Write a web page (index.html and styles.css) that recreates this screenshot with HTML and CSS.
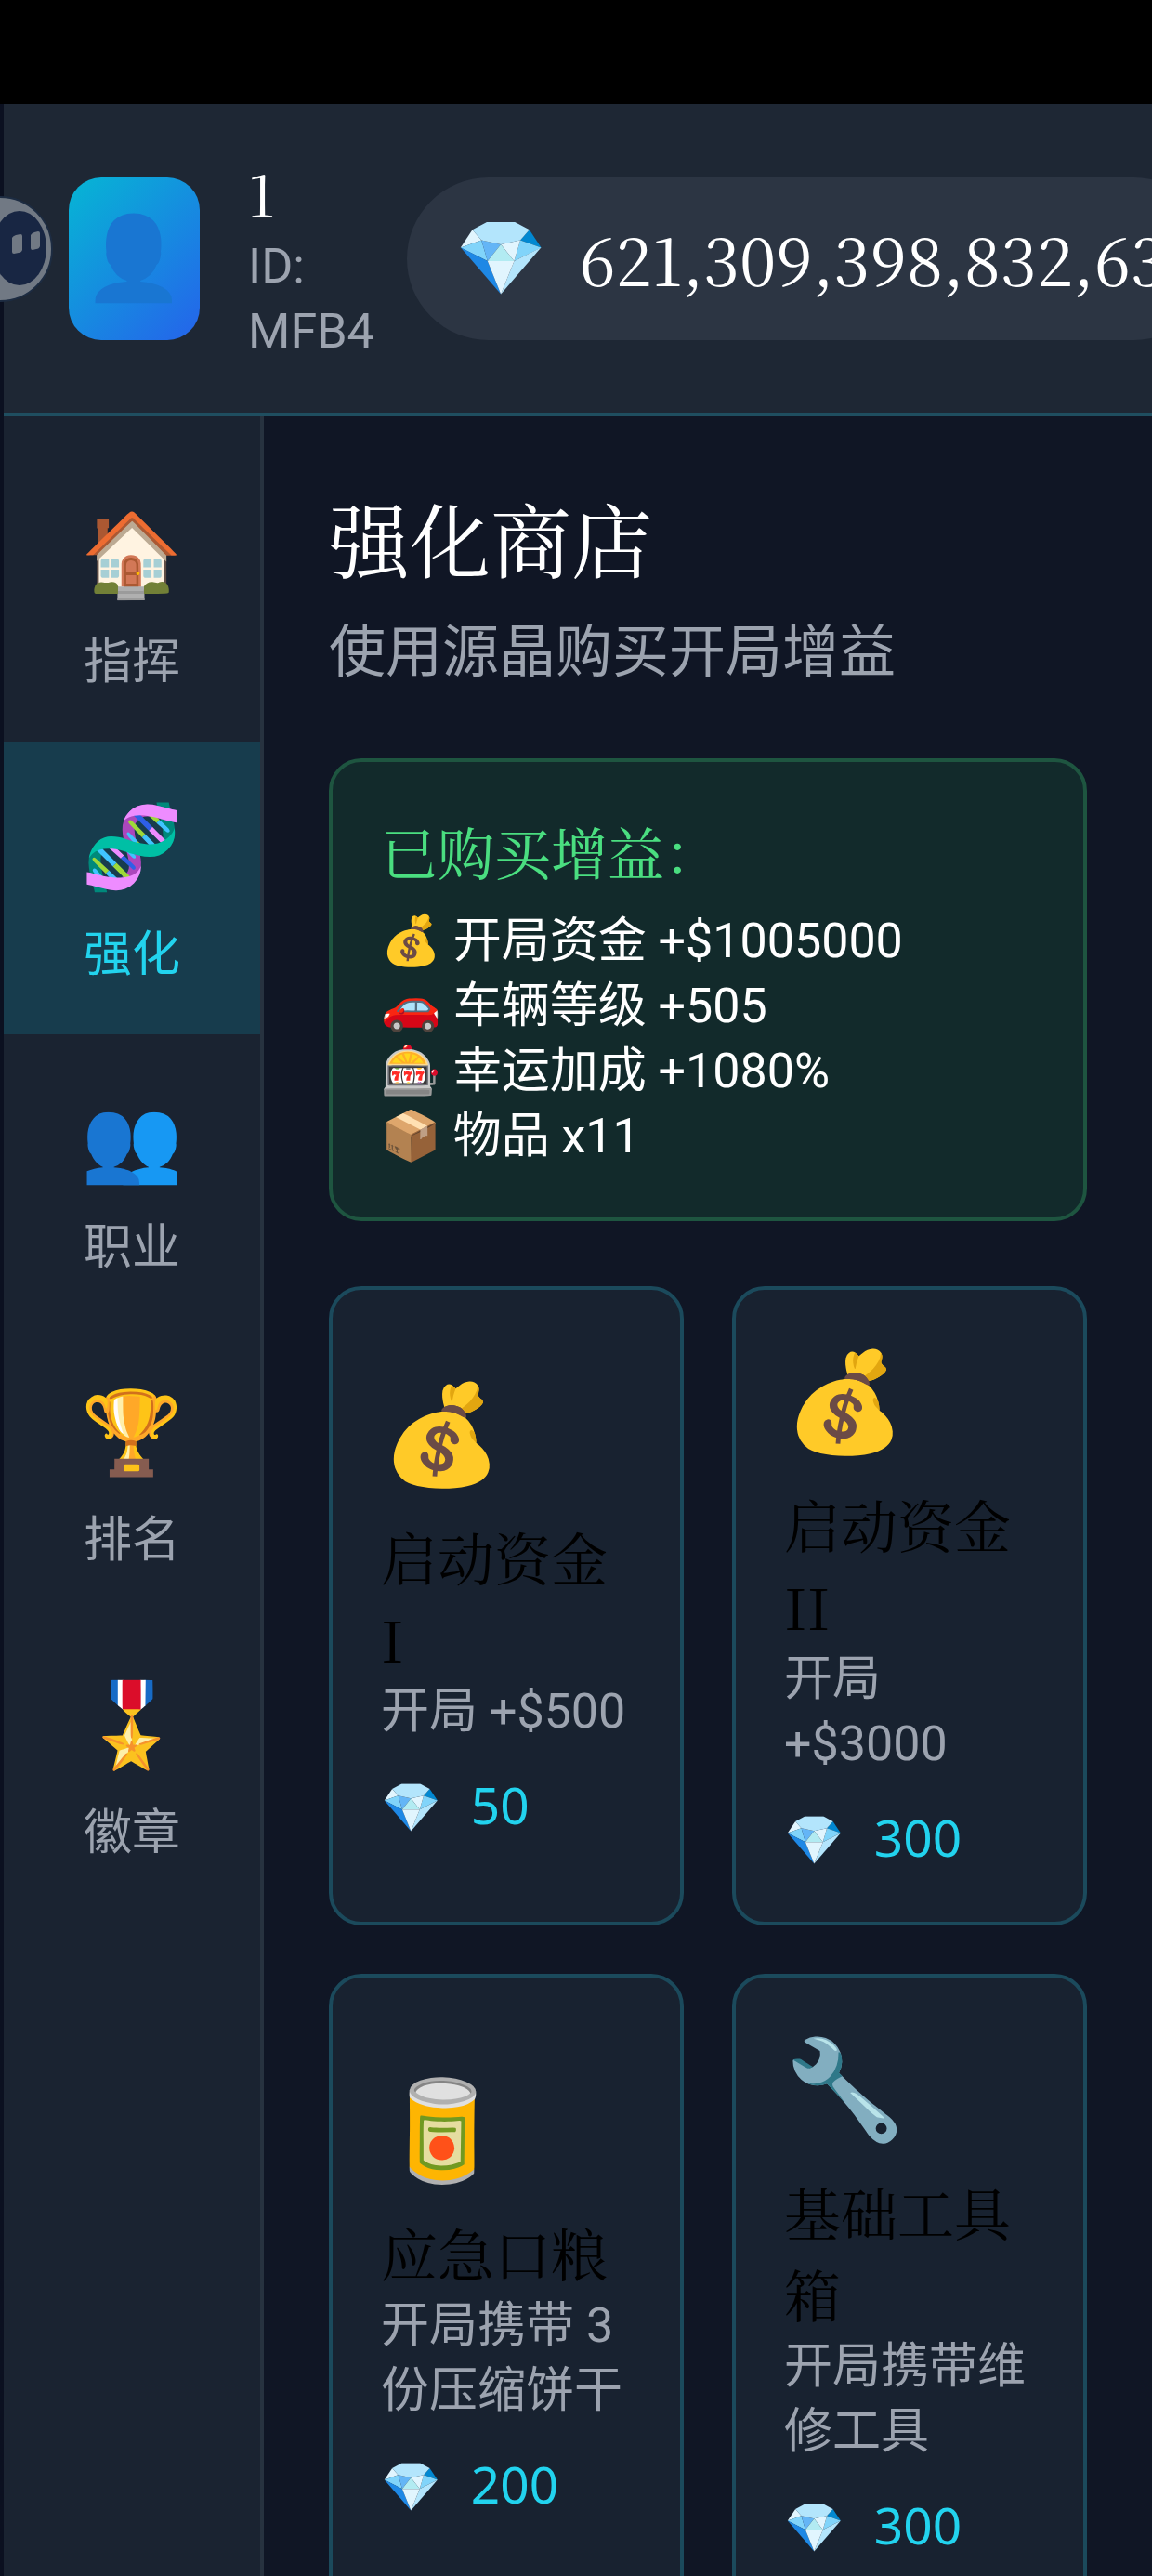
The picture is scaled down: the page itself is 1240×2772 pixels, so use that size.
FILE: index.html
```html
<!DOCTYPE html>
<html lang="zh-CN">
<head>
  <meta charset="UTF-8" />
  <meta name="viewport" content="width=device-width, initial-scale=1.0"/>
  <title>强化商店</title>
  <link rel="stylesheet" href="styles.css">
</head>
<body>
	<div class="status-bar"></div>
	<div class="app">
		<header class="header">
			<div class="avatar"><span class="emoji">👤</span></div>
			<div class="user">
				<div class="user-name">1</div>
				<div class="user-id">ID: MFB4</div>
			</div>
			<div class="balance">
				<span class="emoji balance-icon">💎</span>
				<span>621,309,398,832,63</span>
			</div>
		</header>
		<div class="body">
			<nav class="sidebar">
				<button class="nav-item"><span class="emoji nav-icon">🏠</span>指挥</button>
				<button class="nav-item active"><span class="emoji nav-icon">🧬</span>强化</button>
				<button class="nav-item"><span class="emoji nav-icon">👥</span>职业</button>
				<button class="nav-item"><span class="emoji nav-icon">🏆</span>排名</button>
				<button class="nav-item"><span class="emoji nav-icon">🎖️</span>徽章</button>
			</nav>
			<main class="main">
				<h1 class="title">强化商店</h1>
				<p class="subtitle">使用源晶购买开局增益</p>

				<section class="owned">
					<h2 class="owned-title">已购买增益：</h2>
					<ul class="owned-list">
						<li><span class="emoji">💰</span> 开局资金 +$1005000</li>
						<li><span class="emoji">🚗</span> 车辆等级 +505</li>
						<li><span class="emoji">🎰</span> 幸运加成 +1080%</li>
						<li><span class="emoji">📦</span> 物品 x11</li>
					</ul>
				</section>

				<div class="shop">
					<button class="card">
						<span class="emoji card-icon">💰</span>
						<span class="card-name">启动资金 I</span>
						<span class="card-desc">开局 +$500</span>
						<span class="price"><span class="emoji">💎</span>50</span>
					</button>
					<button class="card">
						<span class="emoji card-icon">💰</span>
						<span class="card-name">启动资金 II</span>
						<span class="card-desc">开局 +$3000</span>
						<span class="price"><span class="emoji">💎</span>300</span>
					</button>
					<button class="card">
						<span class="emoji card-icon">🥫</span>
						<span class="card-name">应急口粮</span>
						<span class="card-desc">开局携带 3 份压缩饼干</span>
						<span class="price"><span class="emoji">💎</span>200</span>
					</button>
					<button class="card">
						<span class="emoji card-icon">🔧</span>
						<span class="card-name">基础工具箱</span>
						<span class="card-desc">开局携带维修工具</span>
						<span class="price"><span class="emoji">💎</span>300</span>
					</button>
				</div>
			</main>
		</div>
	</div>

	<svg class="bubble" viewBox="0 0 116 116" aria-hidden="true">
		<circle cx="58" cy="58" r="56" fill="#717984" stroke="#1d2c42" stroke-width="2"/>
		<ellipse cx="79" cy="57" rx="29" ry="40" fill="#182643"/>
		<path d="M71 46q1-2 4-3l5-1q2 0 2 2v15q-1 3-4 3l-5 1q-2 0-2-2z" fill="#717984"/>
		<path d="M91 43q1-2 4-3l4-1q2 0 2 2v14q-1 3-4 3l-4 1q-2 0-2-2z" fill="#717984"/>
	</svg>
</body>
</html>
```
FILE: styles.css
```css
* {
	box-sizing: border-box;
}

body {
	display: flex;
	flex-direction: column;
	height: 100vh;
	margin: 0;
	overflow: hidden;
	background: #101625;
	color: #fff;
	font-family: Roboto, "Noto Sans CJK SC", sans-serif;
	font-size: 52px;
	line-height: 70px;
}

button {
	margin: 0;
	border: 0;
	background: none;
	font: inherit;
	color: #9ca3af;
}

.emoji {
	font-family: "Noto Color Emoji", sans-serif;
}

.status-bar {
	flex: none;
	height: 112px;
	background: #000;
}

.app {
	flex: 1;
	display: flex;
	flex-direction: column;
	min-height: 0;
	border-left: 4px solid #0b1020;
}

/* header */
.header {
	flex: none;
	display: flex;
	align-items: center;
	height: 336px;
	padding-left: 70px;
	overflow: hidden;
	background: #1e2734;
	border-bottom: 4px solid #1f4e60;
}

.avatar {
	flex: none;
	display: flex;
	align-items: center;
	justify-content: center;
	width: 141px;
	height: 175px;
	margin-right: 52px;
	border-radius: 35px;
	background: linear-gradient(135deg, #06b6d4, #2563eb);
	font-size: 88px;
}

.user {
	flex: none;
	width: 136px;
	margin-right: 35px;
	color: #9ca3af;
}

.user-name {
	font-family: "Noto Serif CJK SC", "Liberation Serif", serif;
	font-size: 61px;
	line-height: 88px;
	color: #fff;
}

.balance {
	flex: none;
	display: flex;
	align-items: center;
	gap: 35px;
	height: 175px;
	padding: 0 52px;
	border-radius: 88px;
	background: #2c3543;
	font-family: "Noto Serif CJK SC", "Liberation Serif", serif;
	font-size: 70px;
	white-space: nowrap;
}

.balance-icon {
	font-size: 79px;
}

.body {
	flex: 1;
	display: flex;
	min-height: 0;
}

/* left navigation */
.sidebar {
	flex: none;
	width: 280px;
	padding-top: 35px;
	background: #1a2331;
	border-right: 4px solid #27323f;
}

.nav-item {
	display: flex;
	flex-direction: column;
	align-items: center;
	width: 100%;
	padding: 52px 0 50px;
}

.nav-item.active {
	background: #173c4d;
	color: #22d3ee;
}

.nav-icon {
	height: 123px;
	margin-bottom: 20px;
	font-size: 88px;
	line-height: 123px;
}

/* shop page */
.main {
	flex: 1;
	min-width: 0;
	padding: 70px;
}

.title,
.owned-title,
.card-name {
	font-family: "Noto Serif CJK SC", "Liberation Serif", serif;
	font-weight: 400;
}

.title {
	margin: 0 0 18px;
	font-size: 87px;
	line-height: 122px;
}

.subtitle {
	margin: 0 0 70px;
	font-size: 61px;
	line-height: 88px;
	color: #9ca3af;
}

.owned {
	margin-bottom: 70px;
	padding: 52px;
	border: 4px solid #1e5540;
	border-radius: 35px;
	background: #122a2b;
}

.owned-title {
	margin: 0 0 18px;
	font-size: 61px;
	line-height: 88px;
	color: #4ade80;
}

.owned-list {
	margin: 0;
	padding: 0;
	list-style: none;
}

.shop {
	display: grid;
	grid-template-columns: 1fr 1fr;
	gap: 52px;
}

.card {
	display: flex;
	flex-direction: column;
	justify-content: center;
	padding: 52px;
	border: 4px solid #1b4a5c;
	border-radius: 35px;
	background: #182230;
	text-align: left;
}

.card-icon {
	height: 140px;
	margin-bottom: 16px;
	font-size: 105px;
	line-height: 140px;
}

.card-name {
	font-size: 61px;
	line-height: 88px;
	color: #000;
}

.price {
	display: flex;
	align-items: baseline;
	gap: 32px;
	margin-top: 30px;
	font-family: "Noto Sans", sans-serif;
	font-size: 55px;
	color: #22d3ee;
}

.price .emoji {
	font-size: 52px;
}

/* floating helper, half off the left edge */
.bubble {
	position: absolute;
	top: 210px;
	left: -58px;
	width: 116px;
	height: 116px;
}
```
